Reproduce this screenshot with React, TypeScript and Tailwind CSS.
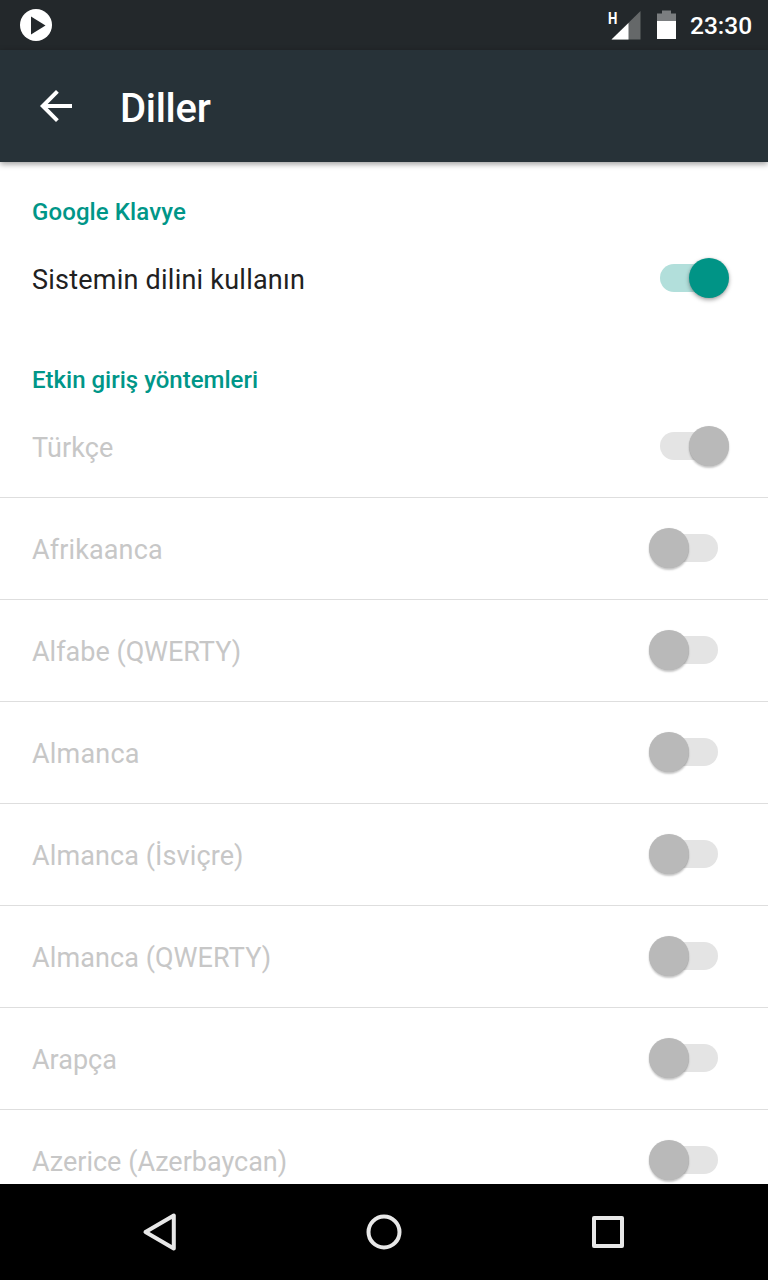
import React from "react";
import clsx from "clsx";

interface Language {
  name: string;
  on?: boolean;
  tracking?: string;
}

const languages: Language[] = [
  { name: "Türkçe", on: true, tracking: "tracking-[0.1px]" },
  { name: "Afrikaanca", tracking: "tracking-[0.12px]" },
  { name: "Alfabe (QWERTY)" },
  { name: "Almanca", tracking: "tracking-[0.2px]" },
  { name: "Almanca (İsviçre)", tracking: "tracking-[0.1px]" },
  { name: "Almanca (QWERTY)", tracking: "tracking-[0.1px]" },
  { name: "Arapça" },
  { name: "Azerice (Azerbaycan)" },
];

const Switch: React.FC<{ on?: boolean; disabled?: boolean }> = ({ on, disabled }) => (
  <div className="relative mt-[30px] mr-[39px] h-10 w-20 shrink-0">
    <div
      className={clsx(
        "absolute top-1.5 left-[11px] h-7 w-[58px] rounded-full",
        disabled ? "bg-[#e4e4e4]" : "bg-[#b2dfdb]"
      )}
    />
    <div
      className={clsx(
        "absolute top-0 size-10 rounded-full",
        on ? "left-10" : "left-0",
        disabled
          ? "bg-[#b9b9b9] shadow-[0_2px_2px_rgba(0,0,0,0.22),0_0_1px_rgba(0,0,0,0.15)]"
          : "bg-[#009486] shadow-[0_2px_4px_rgba(0,0,0,0.35),0_0_2px_rgba(0,0,0,0.12)]"
      )}
    />
  </div>
);

const Row: React.FC<{
  label: string;
  on?: boolean;
  disabled?: boolean;
  tracking?: string;
}> = ({ label, on, disabled, tracking }) => (
  <div
    className={clsx(
      "flex h-[102px] shrink-0 justify-between border-b",
      disabled ? "border-[#dedede]" : "border-transparent"
    )}
  >
    <span
      className={clsx(
        "mt-8 ml-8 text-[27px] leading-10 whitespace-nowrap",
        disabled ? "text-[#c7c7c7]" : "text-[#212121]",
        tracking
      )}
    >
      {label}
    </span>
    <Switch on={on} disabled={disabled} />
  </div>
);

const SectionTitle: React.FC<{ children: React.ReactNode; tracking?: string }> = ({
  children,
  tracking,
}) => (
  <h2
    className={clsx(
      "h-[66px] shrink-0 pt-[34px] pl-8 text-[24px] leading-8 font-medium text-[#009688]",
      tracking
    )}
  >
    {children}
  </h2>
);

const StatusBar: React.FC = () => (
  <div className="flex h-[50px] shrink-0 items-center bg-[#23282b] pr-4 pl-5 text-white">
    <svg className="size-8" viewBox="0 0 32 32">
      <circle cx="16" cy="16" r="16" fill="#fff" />
      <path d="M11 7.500v18L25.500 16.500z" fill="#23282b" />
    </svg>
    <div className="relative ml-auto h-[50px] w-[70px]">
      <svg className="h-[50px] w-[70px]" viewBox="0 0 70 50">
        <path d="M34.500 11v28.500H5.500z" fill="#656869" />
        <path d="M22.500 23v16.500H5.500z" fill="#fff" />
        <path d="M56 10.500h9v3h5v8H51v-8h5z" fill="#7b7e80" />
        <path d="M51 21h19v18H51z" fill="#fff" />
      </svg>
      <span className="absolute top-[9px] left-[2px] origin-left scale-x-[0.78] text-[17px] leading-[18px] font-bold">
        H
      </span>
    </div>
    <span className="mt-0.5 ml-3.5 w-[62px] text-[24.500px] leading-[50px] font-medium">23:30</span>
  </div>
);

const AppBar: React.FC = () => (
  <header className="relative z-10 flex h-28 shrink-0 items-center bg-[#273238] pl-10 text-white shadow-[0_2px_6px_rgba(0,0,0,0.4)]">
    <svg className="size-8" viewBox="0 0 32 32" fill="#fff">
      <path d="M32 14H7.700L18.800 2.800 16 0 0 16l16 16 2.800-2.800L7.700 18H32z" />
    </svg>
    <h1 className="mt-1.5 ml-12 text-[40px] leading-none font-medium tracking-[-0.3px]">Diller</h1>
  </header>
);

const NavBar: React.FC = () => (
  <nav className="flex h-24 shrink-0 items-center justify-around bg-black px-12">
    <svg className="size-12" viewBox="0 0 48 48" fill="none" stroke="#e8e8e8" strokeWidth="4">
      <path d="M37.800 7.500v33L9.500 24z" strokeLinejoin="round" />
    </svg>
    <svg className="size-12" viewBox="0 0 48 48" fill="none" stroke="#e8e8e8" strokeWidth="4">
      <circle cx="24" cy="24" r="15.500" />
    </svg>
    <svg className="size-12" viewBox="0 0 48 48" fill="none" stroke="#e8e8e8" strokeWidth="4">
      <path d="M10 10h28v28H10z" strokeLinejoin="round" />
    </svg>
  </nav>
);

export default function App() {
  return (
    <div className="flex h-[1280px] w-[768px] flex-col overflow-hidden bg-white font-['Roboto',sans-serif]">
      <StatusBar />
      <AppBar />
      <main className="flex min-h-0 flex-1 flex-col overflow-hidden">
        <SectionTitle tracking="tracking-[0.1px]">Google Klavye</SectionTitle>
        <Row label="Sistemin dilini kullanın" tracking="tracking-[0.23px]" on />
        <SectionTitle>Etkin giriş yöntemleri</SectionTitle>
        {languages.map((lang) => (
          <Row key={lang.name} label={lang.name} on={lang.on} tracking={lang.tracking} disabled />
        ))}
      </main>
      <NavBar />
    </div>
  );
}
